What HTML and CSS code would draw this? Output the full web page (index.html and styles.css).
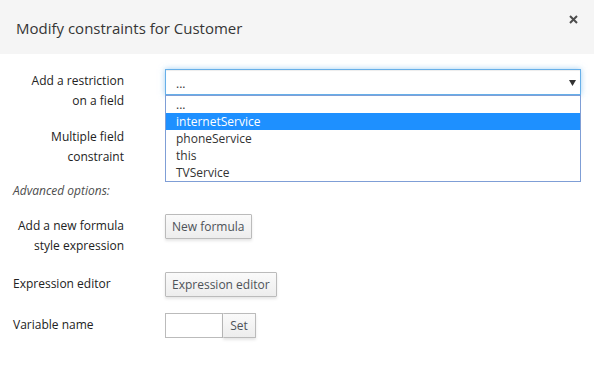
FILE: index.html
```html
<!DOCTYPE html>
<html lang="en">
<head>
    <meta charset="UTF-8">
    <title>Modify constraints</title>
    <link rel="stylesheet" href="styles.css">
</head>
<body>
    <div class="modal">
        <div class="modal-header">
            <h4 class="modal-title">Modify constraints for Customer</h4>
            <button class="close" aria-label="Close">
                <svg width="9" height="9" viewBox="0 0 9 9"><path d="M1 1L8 8M8 1L1 8" stroke="#4d4d4d" stroke-width="2"/></svg>
            </button>
        </div>
        <div class="modal-body">
            <div class="form-row row-first">
                <label class="form-label">Add a restriction on a field</label>
                <div class="select-wrap">
                    <div class="select-box">
                        <span>...</span>
                        <svg class="caret" width="7" height="6" viewBox="0 0 7 6"><path d="M0 0H7L3.5 6Z" fill="#333"/></svg>
                    </div>
                    <ul class="select-list">
                        <li>...</li>
                        <li class="active">internetService</li>
                        <li>phoneService</li>
                        <li>this</li>
                        <li>TVService</li>
                    </ul>
                </div>
            </div>
            <div class="form-row row-second">
                <label class="form-label">Multiple field constraint</label>
            </div>
            <p class="advanced">Advanced options:</p>
            <div class="form-row row-formula">
                <label class="form-label">Add a new formula style expression</label>
                <button class="btn">New formula</button>
            </div>
            <div class="form-row row-editor">
                <label class="form-label label-left">Expression editor</label>
                <button class="btn">Expression editor</button>
            </div>
            <div class="form-row">
                <label class="form-label label-left">Variable name</label>
                <div class="input-group">
                    <input type="text" class="var-input">
                    <button class="btn btn-set">Set</button>
                </div>
            </div>
        </div>
    </div>
</body>
</html>
```

FILE: styles.css
```css
body {
    margin: 0;
    font-family: 'Open Sans', 'Liberation Sans', sans-serif;
    font-size: 12px;
    color: #363636;
    background-color: #fff;
}
.modal-header {
    height: 54px;
    background-color: #f5f5f5;
    display: flex;
    align-items: center;
    justify-content: space-between;
    padding: 0 16px 0 16px;
}
.modal-title {
    margin: 0;
    font-size: 15px;
    font-weight: 400;
    color: #363636;
    padding-top: 1px;
}
.close {
    background: none;
    border: none;
    padding: 0;
    margin-top: -16px;
    cursor: pointer;
}
.modal-body {
    padding: 15px 13px 0 12px;
}
.form-row {
    display: flex;
    align-items: flex-start;
    margin-bottom: 16px;
}
.form-label {
    width: 109px;
    margin-left: 3px;
    margin-right: 41px;
    padding-top: 2px;
    text-align: right;
    font-weight: 400;
    color: #222;
    line-height: 20px;
}
.form-label.label-left {
    text-align: left;
    margin-left: 0;
    padding-left: 1px;
    width: 111px;
}
.row-first {
    margin-bottom: 14px;
}
.row-second {
    margin-bottom: 0;
}
.advanced {
    margin: 14px 0 13px 1px;
    line-height: 20px;
    font-style: italic;
    color: #4d4d4d;
}
.select-wrap {
    position: relative;
    flex: 1;
}
.select-box {
    height: 26px;
    box-sizing: border-box;
    border: 1px solid #66afe9;
    box-shadow: inset 0 1px 1px rgba(0, 0, 0, 0.075), 0 0 6px rgba(102, 175, 233, 0.6);
    display: flex;
    align-items: center;
    justify-content: space-between;
    padding: 2px 4px 0 10px;
    background-color: #fff;
}
.select-list {
    position: absolute;
    top: 26px;
    left: 0;
    right: 0;
    margin: 0;
    padding: 0;
    list-style: none;
    background-color: #fff;
    border: 1px solid #7f9ed6;
    z-index: 10;
}
.select-list li {
    height: 17px;
    line-height: 17px;
    padding-left: 10px;
    color: #333;
}
.select-list li.active {
    background-color: #1e90ff;
    color: #fff;
}
.btn {
    font-family: inherit;
    font-size: 12px;
    color: #4d5258;
    height: 25px;
    padding: 0 6px;
    background: linear-gradient(#fafafa, #ededed);
    border: 1px solid #bbb;
    border-radius: 1px;
    box-shadow: 0 2px 3px rgba(3, 3, 3, 0.1);
    cursor: pointer;
}
.input-group {
    display: flex;
}
.var-input {
    width: 58px;
    height: 25px;
    box-sizing: border-box;
    border: 1px solid #bbb;
    margin: 0;
    padding: 2px 6px;
}
.btn-set {
    border-left: none;
    width: 33px;
    padding: 0;
}
```
